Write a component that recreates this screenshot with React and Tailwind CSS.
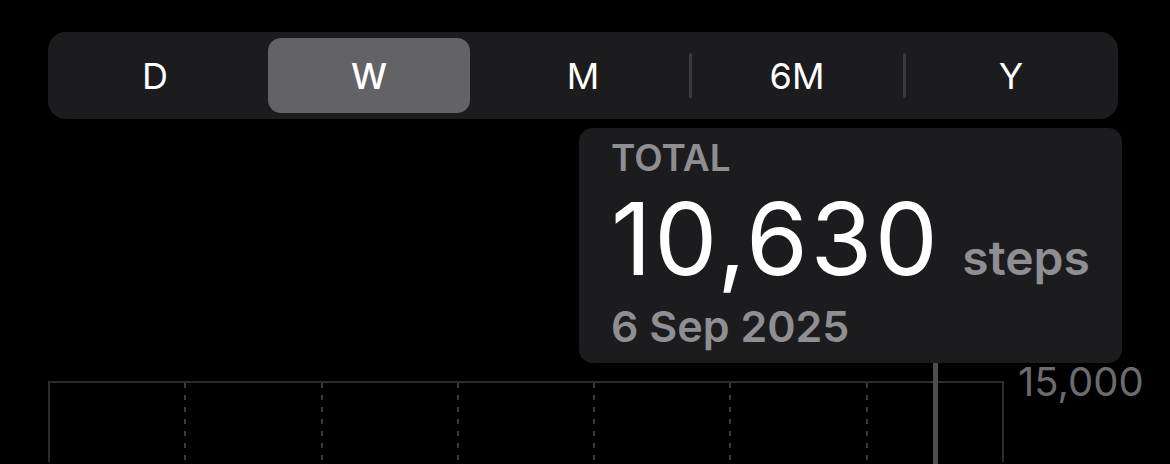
import React from 'react';

const tabs = ['D', 'W', 'M', '6M', 'Y'];

const Segmented = ({ active }) => (
  <div className="flex h-[87px] w-[1070px] rounded-[18px] bg-[#1c1c1e] py-[6px]">
    {tabs.map((t, i) => {
      const isActive = t === active;
      // divider shows only between two unselected segments
      const showDivider =
        i > 0 && tabs[i - 1] !== active && !isActive && i > 1;
      return (
        <div key={t} className="relative flex w-[214px] items-center justify-center">
          {showDivider && (
            <div className="absolute left-[-1px] top-[15px] h-[45px] w-[3px] rounded-full bg-[#3a3a3c]" />
          )}
          <div
            className={`mx-[6px] flex h-full w-full items-center justify-center rounded-[13px] text-[36px] text-white ${
              isActive ? 'bg-[#636366] font-medium' : 'font-normal'
            }`}
          >
            {t}
          </div>
        </div>
      );
    })}
  </div>
);

const Chart = () => {
  const cols = [0, 1, 2, 3, 4, 5, 6];
  return (
    <div className="flex">
      <div className="mt-[18px] flex h-[81px] w-[956px] border-l-2 border-t-2 border-[#2c2c2e]">
        {cols.map((c) => (
          <div key={c} className="flex flex-1 justify-end">
            {c < 6 ? (
              <div className="h-full w-[2px] bg-[linear-gradient(to_bottom,#3a3a3c_5px,transparent_5px)] bg-[length:2px_12px] bg-repeat-y" />
            ) : (
              <div className="h-full w-[2px] bg-[#2c2c2e]" />
            )}
          </div>
        ))}
      </div>
      <div className="ml-[14px] text-[40px] leading-[38px] text-[#6c6c70]">15,000</div>
    </div>
  );
};

export default function App() {
  return (
    <div
      className="relative h-[464px] w-[1170px] overflow-hidden bg-black pl-[48px] pt-[32px]"
      style={{ fontFamily: 'Inter, "Noto Sans", sans-serif' }}
    >
      <Segmented active="W" />

      {/* Summary card */}
      <div className="relative ml-[531px] mt-[9px] h-[235px] w-[543px] rounded-[14px] bg-[#1c1c1e] pl-[32px] pt-[12px]">
        <div className="text-[37px] font-semibold leading-[36px] text-[#8e8e93]">TOTAL</div>
        <div className="mt-[13px] flex items-baseline gap-[22px]">
          <span className="text-[100px] font-normal leading-[100px] tracking-[2.5px] text-white">10,630</span>
          <span className="text-[48px] font-semibold leading-[46px] text-[#8e8e93]">steps</span>
        </div>
        <div className="mt-[16px] text-[43px] font-semibold leading-[43px] text-[#8e8e93]">6 Sep 2025</div>
        {/* cursor line */}
        <div className="absolute left-[354px] top-full h-[120px] w-[5px] bg-[#4d4d50]" />
      </div>

      <Chart />
    </div>
  );
}
